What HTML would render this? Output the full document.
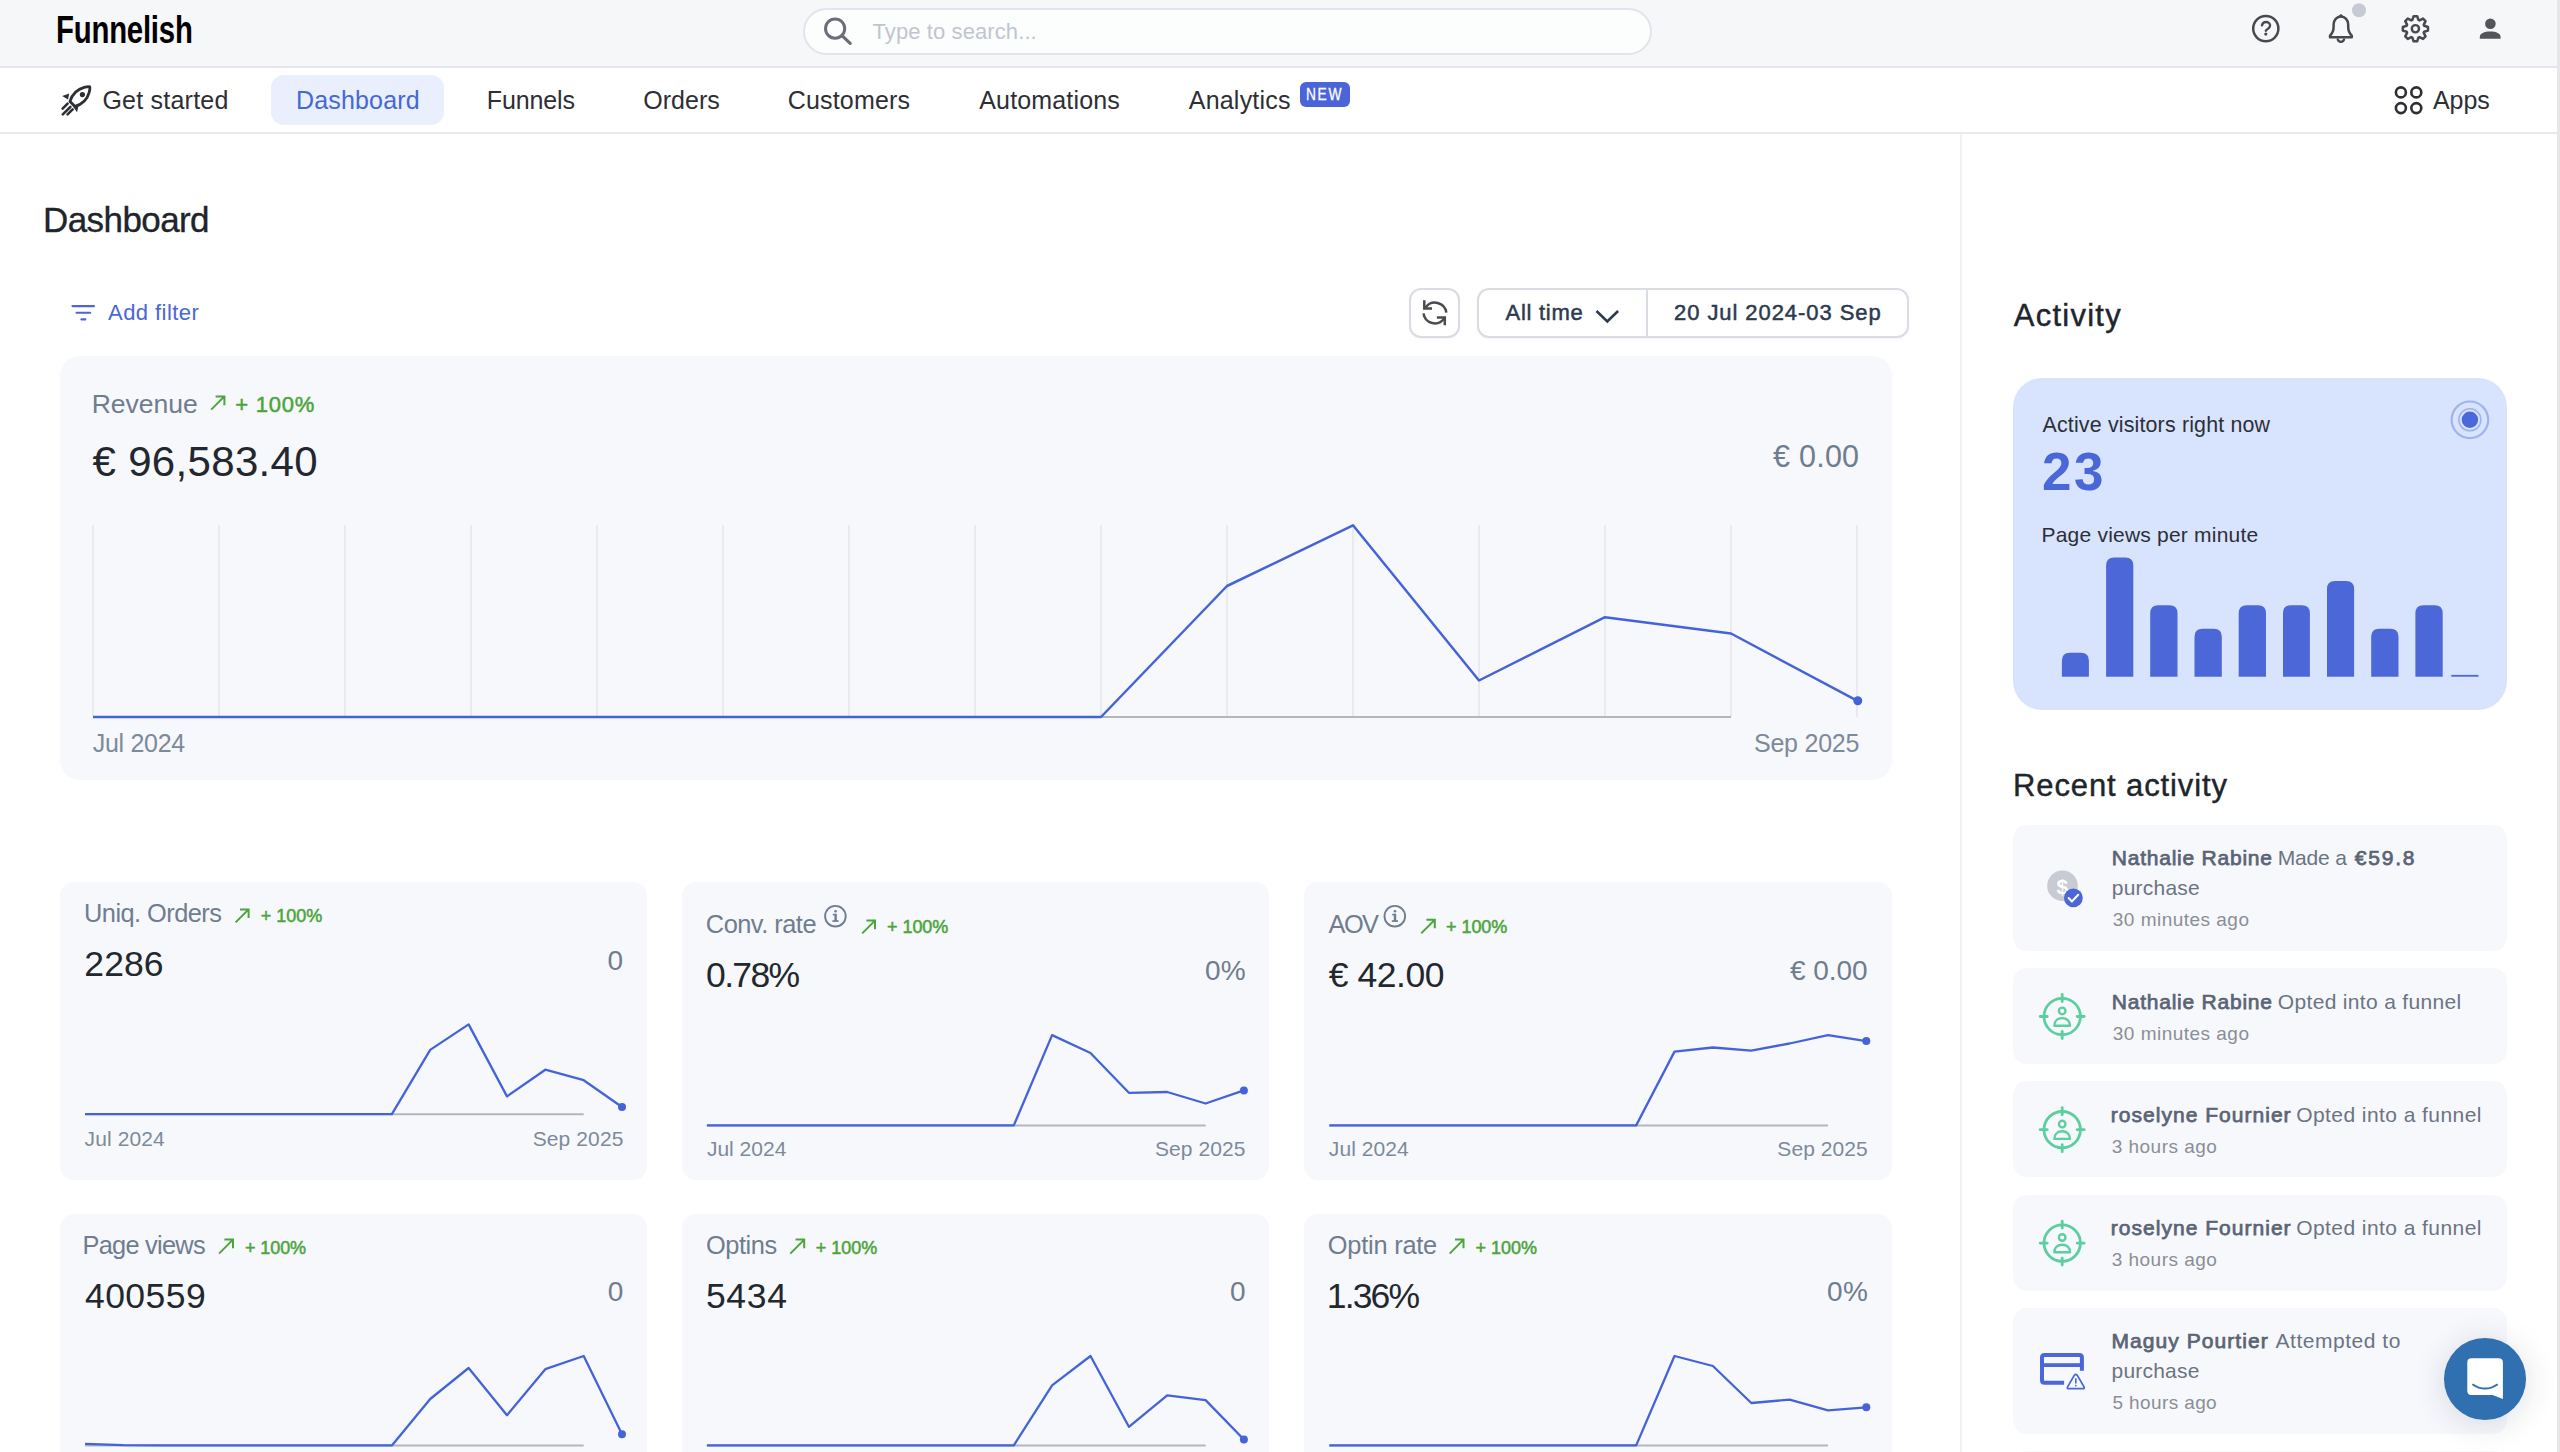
<!DOCTYPE html>
<html><head><meta charset="utf-8"><title>Funnelish Dashboard</title>
<style>
html,body{margin:0;padding:0;}
body{width:2560px;height:1452px;overflow:hidden;position:relative;background:#ffffff;font-family:"Liberation Sans",sans-serif;}
.a{position:absolute;box-sizing:border-box;}
.t{position:absolute;white-space:nowrap;line-height:1;font-family:"Liberation Sans",sans-serif;}
svg.ov{position:absolute;left:0;top:0;}
</style></head>
<body>
<!-- top bar -->
<div class="a" style="left:0;top:0;width:2560px;height:66px;background:#f6f7f9;"></div>
<div class="a" style="left:0;top:66px;width:2560px;height:2px;background:#e4e5ee;"></div>
<!-- nav -->
<div class="a" style="left:0;top:132px;width:2560px;height:2px;background:#e8e9f1;"></div>
<!-- sidebar border -->
<div class="a" style="left:1960px;top:134px;width:2px;height:1318px;background:#f1f1f7;"></div>
<!-- right edge -->
<div class="a" style="left:2557px;top:0;width:3px;height:1452px;background:#e6e6e9;"></div>

<!-- search -->
<div class="a" style="left:803px;top:8px;width:849px;height:47px;border:2px solid #e2e3ec;border-radius:24px;background:#fcfdfd;"></div>
<!-- nav pill -->
<div class="a" style="left:271px;top:75px;width:173px;height:50px;border-radius:13px;background:#e9effc;"></div>
<div class="a" style="left:1299.5px;top:82px;width:50px;height:25px;border-radius:6px;background:#4b65d8;"></div>

<!-- buttons -->
<div class="a" style="left:1409px;top:288px;width:51px;height:50px;border:2px solid #d9dce3;border-radius:12px;background:#fff;box-shadow:0 1px 2px rgba(0,0,0,0.04);"></div>
<div class="a" style="left:1477px;top:288px;width:432px;height:50px;border:2px solid #d9dce3;border-radius:12px;background:#fff;box-shadow:0 1px 2px rgba(0,0,0,0.04);"></div>
<div class="a" style="left:1646px;top:289px;width:2px;height:48px;background:#d9dce3;"></div>

<!-- cards -->
<div class="a" style="left:60px;top:356px;width:1832px;height:424px;border-radius:20px;background:#f7f8fc;"></div>
<div class="a" style="left:60px;top:882px;width:587px;height:298px;border-radius:14px;background:#f7f8fc;"></div>
<div class="a" style="left:682px;top:882px;width:587px;height:298px;border-radius:14px;background:#f7f8fc;"></div>
<div class="a" style="left:1304px;top:882px;width:588px;height:298px;border-radius:14px;background:#f7f8fc;"></div>
<div class="a" style="left:60px;top:1214px;width:587px;height:300px;border-radius:14px;background:#f7f8fc;"></div>
<div class="a" style="left:682px;top:1214px;width:587px;height:300px;border-radius:14px;background:#f7f8fc;"></div>
<div class="a" style="left:1304px;top:1214px;width:588px;height:300px;border-radius:14px;background:#f7f8fc;"></div>

<!-- sidebar cards -->
<div class="a" style="left:2013px;top:378px;width:494px;height:332px;border-radius:29px;background:#d8e3fd;"></div>
<div class="a" style="left:2013px;top:825px;width:494px;height:126px;border-radius:14px;background:#f7f8fc;"></div>
<div class="a" style="left:2013px;top:968px;width:494px;height:96px;border-radius:14px;background:#f7f8fc;"></div>
<div class="a" style="left:2013px;top:1081px;width:494px;height:96px;border-radius:14px;background:#f7f8fc;"></div>
<div class="a" style="left:2013px;top:1195px;width:494px;height:96px;border-radius:14px;background:#f7f8fc;"></div>
<div class="a" style="left:2013px;top:1308px;width:494px;height:126px;border-radius:14px;background:#f7f8fc;"></div>
<div class="a" style="left:2013px;top:1451px;width:494px;height:60px;border-radius:14px;background:#f7f8fc;"></div>

<span class="t" style="left:1306.4px;top:85.9px;font-size:16.4px;color:#fff;transform-origin:0 0;transform:scaleX(0.84);letter-spacing:2px;-webkit-text-stroke:0.3px #fff;">NEW</span>
<!-- logo -->
<span class="t" style="left:56px;top:10.8px;font-size:38.9px;font-weight:bold;color:#000;transform-origin:0 0;transform:scaleX(0.755);letter-spacing:-0.3px;">Funnelish</span>

<span class="t" style="left:872.50px;top:20.60px;font-size:22px;color:#c2c5cf;letter-spacing:0.098px;">Type to search...</span>
<span class="t" style="left:102.40px;top:87.75px;font-size:25px;color:#2d2f35;letter-spacing:0.233px;">Get started</span>
<span class="t" style="left:486.75px;top:87.75px;font-size:25px;color:#2d2f35;letter-spacing:-0.115px;">Funnels</span>
<span class="t" style="left:643.25px;top:87.75px;font-size:25px;color:#2d2f35;letter-spacing:0.019px;">Orders</span>
<span class="t" style="left:787.75px;top:87.75px;font-size:25px;color:#2d2f35;letter-spacing:0.174px;">Customers</span>
<span class="t" style="left:979.25px;top:87.75px;font-size:25px;color:#2d2f35;letter-spacing:0.154px;">Automations</span>
<span class="t" style="left:1188.75px;top:87.75px;font-size:25px;color:#2d2f35;letter-spacing:0.214px;">Analytics</span>
<span class="t" style="left:2433.00px;top:87.75px;font-size:25px;color:#2d2f35;letter-spacing:-0.094px;">Apps</span>
<span class="t" style="left:296.00px;top:88.00px;font-size:25px;color:#4767d6;letter-spacing:0.169px;">Dashboard</span>
<span class="t" style="left:43.00px;top:202.35px;font-size:35px;color:#20242b;letter-spacing:-0.582px;-webkit-text-stroke:0.35px #20242b;">Dashboard</span>
<span class="t" style="left:108.10px;top:301.90px;font-size:22px;color:#4a66d8;letter-spacing:0.423px;">Add filter</span>
<span class="t" style="left:1505.60px;top:301.90px;font-size:22px;color:#2c3a4f;-webkit-text-stroke:0.5px #2c3a4f;letter-spacing:0.716px;">All time</span>
<span class="t" style="left:1674.00px;top:301.90px;font-size:22px;color:#2c3a4f;-webkit-text-stroke:0.5px #2c3a4f;letter-spacing:0.931px;">20 Jul 2024-03 Sep</span>
<span class="t" style="left:91.75px;top:390.59px;font-size:26.6px;color:#6f7d8f;letter-spacing:-0.085px;">Revenue</span>
<span class="t" style="left:235.25px;top:393.55px;font-size:22px;color:#4aa53a;-webkit-text-stroke:0.5px #4aa53a;letter-spacing:0.767px;">+ 100%</span>
<span class="t" style="left:92.50px;top:440.55px;font-size:42px;color:#23272e;letter-spacing:0.323px;">€ 96,583.40</span>
<span class="t" style="left:1773.10px;top:440.97px;font-size:30.5px;color:#6f7d8f;letter-spacing:0.233px;">€ 0.00</span>
<span class="t" style="left:92.80px;top:731.15px;font-size:25px;color:#7d8a9a;letter-spacing:-0.302px;">Jul 2024</span>
<span class="t" style="left:1754.00px;top:731.15px;font-size:25px;color:#7d8a9a;letter-spacing:-0.234px;">Sep 2025</span>
<span class="t" style="left:84.10px;top:901.01px;font-size:25.4px;color:#6f7d8f;letter-spacing:-0.557px;">Uniq. Orders</span>
<span class="t" style="left:260.80px;top:907.30px;font-size:18px;color:#4aa53a;-webkit-text-stroke:0.5px #4aa53a;">+ 100%</span>
<span class="t" style="left:84.30px;top:947.08px;font-size:35.5px;color:#23272e;letter-spacing:0.090px;">2286</span>
<span class="t" style="left:607.60px;top:946.50px;font-size:28px;color:#6f7d8f;">0</span>
<span class="t" style="left:84.50px;top:1127.55px;font-size:21px;color:#7d8a9a;letter-spacing:0.126px;">Jul 2024</span>
<span class="t" style="left:532.70px;top:1127.55px;font-size:21px;color:#7d8a9a;letter-spacing:0.109px;">Sep 2025</span>
<span class="t" style="left:705.80px;top:911.91px;font-size:25.4px;color:#6f7d8f;letter-spacing:-0.503px;">Conv. rate</span>
<span class="t" style="left:887.00px;top:918.20px;font-size:18px;color:#4aa53a;-webkit-text-stroke:0.5px #4aa53a;letter-spacing:-0.049px;">+ 100%</span>
<span class="t" style="left:706.10px;top:957.83px;font-size:35.5px;color:#23272e;letter-spacing:-1.673px;">0.78%</span>
<span class="t" style="left:1205.10px;top:957.00px;font-size:28px;color:#6f7d8f;letter-spacing:0.028px;">0%</span>
<span class="t" style="left:706.90px;top:1138.05px;font-size:21px;color:#7d8a9a;letter-spacing:0.012px;">Jul 2024</span>
<span class="t" style="left:1154.90px;top:1138.05px;font-size:21px;color:#7d8a9a;letter-spacing:0.080px;">Sep 2025</span>
<span class="t" style="left:1328.60px;top:911.91px;font-size:25.4px;color:#6f7d8f;letter-spacing:-1.600px;">AOV</span>
<span class="t" style="left:1446.00px;top:918.20px;font-size:18px;color:#4aa53a;-webkit-text-stroke:0.5px #4aa53a;letter-spacing:-0.049px;">+ 100%</span>
<span class="t" style="left:1328.80px;top:957.83px;font-size:35.5px;color:#23272e;letter-spacing:-0.467px;">€ 42.00</span>
<span class="t" style="left:1790.00px;top:957.45px;font-size:28px;color:#6f7d8f;letter-spacing:-0.075px;">€ 0.00</span>
<span class="t" style="left:1328.80px;top:1138.05px;font-size:21px;color:#7d8a9a;letter-spacing:0.083px;">Jul 2024</span>
<span class="t" style="left:1777.30px;top:1138.05px;font-size:21px;color:#7d8a9a;letter-spacing:0.080px;">Sep 2025</span>
<span class="t" style="left:82.50px;top:1232.71px;font-size:25.4px;color:#6f7d8f;letter-spacing:-0.750px;">Page views</span>
<span class="t" style="left:244.90px;top:1239.00px;font-size:18px;color:#4aa53a;-webkit-text-stroke:0.5px #4aa53a;letter-spacing:-0.069px;">+ 100%</span>
<span class="t" style="left:85.00px;top:1278.92px;font-size:35.5px;color:#23272e;letter-spacing:0.437px;">400559</span>
<span class="t" style="left:607.70px;top:1277.50px;font-size:28px;color:#6f7d8f;">0</span>
<span class="t" style="left:705.90px;top:1232.71px;font-size:25.4px;color:#6f7d8f;letter-spacing:-0.417px;">Optins</span>
<span class="t" style="left:815.80px;top:1239.00px;font-size:18px;color:#4aa53a;-webkit-text-stroke:0.5px #4aa53a;">+ 100%</span>
<span class="t" style="left:705.90px;top:1278.92px;font-size:35.5px;color:#23272e;letter-spacing:0.723px;">5434</span>
<span class="t" style="left:1230.10px;top:1277.50px;font-size:28px;color:#6f7d8f;">0</span>
<span class="t" style="left:1327.80px;top:1232.71px;font-size:25.4px;color:#6f7d8f;letter-spacing:-0.230px;">Optin rate</span>
<span class="t" style="left:1475.40px;top:1239.00px;font-size:18px;color:#4aa53a;-webkit-text-stroke:0.5px #4aa53a;letter-spacing:0.031px;">+ 100%</span>
<span class="t" style="left:1326.80px;top:1278.92px;font-size:35.5px;color:#23272e;letter-spacing:-1.873px;">1.36%</span>
<span class="t" style="left:1827.00px;top:1277.50px;font-size:28px;color:#6f7d8f;letter-spacing:0.528px;">0%</span>
<span class="t" style="left:2013.75px;top:299.90px;font-size:31px;color:#20242b;letter-spacing:1.260px;-webkit-text-stroke:0.4px #20242b;">Activity</span>
<span class="t" style="left:2042.50px;top:414.81px;font-size:21.4px;color:#2b3038;letter-spacing:0.169px;">Active visitors right now</span>
<span class="t" style="left:2042.00px;top:444.95px;font-size:53px;color:#4a67d8;font-weight:bold;letter-spacing:2.424px;">23</span>
<span class="t" style="left:2041.50px;top:524.05px;font-size:21px;color:#2b3038;letter-spacing:0.212px;">Page views per minute</span>
<span class="t" style="left:2013.00px;top:769.55px;font-size:31px;color:#20242b;letter-spacing:0.887px;-webkit-text-stroke:0.4px #20242b;">Recent activity</span>
<span class="t" style="left:2111.80px;top:846.85px;font-size:21px;color:#5b6475;-webkit-text-stroke:0.75px #5b6475;letter-spacing:0.768px;">Nathalie Rabine</span>
<span class="t" style="left:2277.80px;top:846.85px;font-size:21px;color:#6b7483;letter-spacing:-0.193px;">Made a</span>
<span class="t" style="left:2354.70px;top:846.85px;font-size:21px;color:#5b6475;-webkit-text-stroke:0.75px #5b6475;letter-spacing:1.807px;">€59.8</span>
<span class="t" style="left:2111.80px;top:876.85px;font-size:21px;color:#6b7483;letter-spacing:0.213px;">purchase</span>
<span class="t" style="left:2112.80px;top:910.45px;font-size:19px;color:#8a8e96;letter-spacing:0.481px;">30 minutes ago</span>
<span class="t" style="left:2111.80px;top:990.55px;font-size:21px;color:#5b6475;-webkit-text-stroke:0.75px #5b6475;letter-spacing:0.768px;">Nathalie Rabine</span>
<span class="t" style="left:2277.80px;top:990.55px;font-size:21px;color:#6b7483;letter-spacing:0.333px;">Opted into a funnel</span>
<span class="t" style="left:2112.80px;top:1023.60px;font-size:19px;color:#8a8e96;letter-spacing:0.481px;">30 minutes ago</span>
<span class="t" style="left:2110.80px;top:1103.55px;font-size:21px;color:#5b6475;-webkit-text-stroke:0.75px #5b6475;letter-spacing:1.024px;">roselyne Fournier</span>
<span class="t" style="left:2296.20px;top:1103.55px;font-size:21px;color:#6b7483;letter-spacing:0.433px;">Opted into a funnel</span>
<span class="t" style="left:2111.80px;top:1136.65px;font-size:19px;color:#8a8e96;letter-spacing:0.461px;">3 hours ago</span>
<span class="t" style="left:2110.80px;top:1216.95px;font-size:21px;color:#5b6475;-webkit-text-stroke:0.75px #5b6475;letter-spacing:1.024px;">roselyne Fournier</span>
<span class="t" style="left:2296.20px;top:1216.95px;font-size:21px;color:#6b7483;letter-spacing:0.433px;">Opted into a funnel</span>
<span class="t" style="left:2111.80px;top:1250.05px;font-size:19px;color:#8a8e96;letter-spacing:0.461px;">3 hours ago</span>
<span class="t" style="left:2111.50px;top:1329.95px;font-size:21px;color:#5b6475;-webkit-text-stroke:0.75px #5b6475;letter-spacing:1.061px;">Maguy Pourtier</span>
<span class="t" style="left:2275.50px;top:1329.95px;font-size:21px;color:#6b7483;letter-spacing:0.528px;">Attempted to</span>
<span class="t" style="left:2111.50px;top:1359.95px;font-size:21px;color:#6b7483;letter-spacing:0.213px;">purchase</span>
<span class="t" style="left:2112.50px;top:1393.25px;font-size:19px;color:#8a8e96;letter-spacing:0.381px;">5 hours ago</span>

<svg class="ov" width="2560" height="1452" viewBox="0 0 2560 1452">
<line x1="93" y1="525" x2="93" y2="717" stroke="#e4e5ea" stroke-width="1.5"/>
<line x1="219" y1="525" x2="219" y2="717" stroke="#e4e5ea" stroke-width="1.5"/>
<line x1="345" y1="525" x2="345" y2="717" stroke="#e4e5ea" stroke-width="1.5"/>
<line x1="471" y1="525" x2="471" y2="717" stroke="#e4e5ea" stroke-width="1.5"/>
<line x1="597" y1="525" x2="597" y2="717" stroke="#e4e5ea" stroke-width="1.5"/>
<line x1="723" y1="525" x2="723" y2="717" stroke="#e4e5ea" stroke-width="1.5"/>
<line x1="849" y1="525" x2="849" y2="717" stroke="#e4e5ea" stroke-width="1.5"/>
<line x1="975" y1="525" x2="975" y2="717" stroke="#e4e5ea" stroke-width="1.5"/>
<line x1="1101" y1="525" x2="1101" y2="717" stroke="#e4e5ea" stroke-width="1.5"/>
<line x1="1227" y1="525" x2="1227" y2="717" stroke="#e4e5ea" stroke-width="1.5"/>
<line x1="1353" y1="525" x2="1353" y2="717" stroke="#e4e5ea" stroke-width="1.5"/>
<line x1="1479" y1="525" x2="1479" y2="717" stroke="#e4e5ea" stroke-width="1.5"/>
<line x1="1605" y1="525" x2="1605" y2="717" stroke="#e4e5ea" stroke-width="1.5"/>
<line x1="1731" y1="525" x2="1731" y2="717" stroke="#e4e5ea" stroke-width="1.5"/>
<line x1="1857" y1="525" x2="1857" y2="717" stroke="#e4e5ea" stroke-width="1.5"/>
<line x1="93" y1="717" x2="1731" y2="717" stroke="#b3b6ba" stroke-width="2"/>
<polyline points="93,717 219,717 345,717 471,717 597,717 723,717 849,717 975,717 1101,717 1227,586 1353,525.3 1479,680.5 1605,617.2 1731,633.5 1857,700.7" fill="none" stroke="#4563d9" stroke-width="2.5" stroke-linejoin="round"/>
<circle cx="1857.8" cy="700.7" r="4.5" fill="#4563d9"/>
<line x1="85" y1="1114.2" x2="583.7" y2="1114.2" stroke="#b3b6ba" stroke-width="2"/>
<polyline points="85.0,1114.2 123.4,1114.2 161.7,1114.2 200.1,1114.2 238.4,1114.2 276.8,1114.2 315.2,1114.2 353.5,1114.2 391.9,1114.2 430.2,1049.9 468.6,1024.4 507.0,1096.4 545.3,1069.7 583.7,1080.2 622.0,1107" fill="none" stroke="#4563d9" stroke-width="2.3" stroke-linejoin="round"/>
<circle cx="622.0" cy="1107" r="4" fill="#4563d9"/>
<line x1="706.9" y1="1125.4" x2="1205.6" y2="1125.4" stroke="#b3b6ba" stroke-width="2"/>
<polyline points="706.9,1125.4 745.3,1125.4 783.6,1125.4 822.0,1125.4 860.3,1125.4 898.7,1125.4 937.1,1125.4 975.4,1125.4 1013.8,1125.4 1052.1,1035.1 1090.5,1053 1128.9,1092.8 1167.2,1092 1205.6,1103.5 1243.9,1090.4" fill="none" stroke="#4563d9" stroke-width="2.3" stroke-linejoin="round"/>
<circle cx="1243.9" cy="1090.4" r="4" fill="#4563d9"/>
<line x1="1329.3" y1="1125.4" x2="1828.0" y2="1125.4" stroke="#b3b6ba" stroke-width="2"/>
<polyline points="1329.3,1125.4 1367.7,1125.4 1406.0,1125.4 1444.4,1125.4 1482.7,1125.4 1521.1,1125.4 1559.5,1125.4 1597.8,1125.4 1636.2,1125.4 1674.5,1051.6 1712.9,1047.5 1751.3,1050.6 1789.6,1043.5 1828.0,1035.1 1866.3,1041.1" fill="none" stroke="#4563d9" stroke-width="2.3" stroke-linejoin="round"/>
<circle cx="1866.3" cy="1041.1" r="4" fill="#4563d9"/>
<line x1="85" y1="1445.4" x2="583.7" y2="1445.4" stroke="#b3b6ba" stroke-width="2"/>
<polyline points="85.0,1443.8 123.4,1445.2 161.7,1445.4 200.1,1445.4 238.4,1445.4 276.8,1445.4 315.2,1445.4 353.5,1445.4 391.9,1445.4 430.2,1399 468.6,1368 507.0,1415.2 545.3,1369.2 583.7,1356 622.0,1434.2" fill="none" stroke="#4563d9" stroke-width="2.3" stroke-linejoin="round"/>
<circle cx="622.0" cy="1434.2" r="4" fill="#4563d9"/>
<line x1="706.9" y1="1445.4" x2="1205.6" y2="1445.4" stroke="#b3b6ba" stroke-width="2"/>
<polyline points="706.9,1445.4 745.3,1445.4 783.6,1445.4 822.0,1445.4 860.3,1445.4 898.7,1445.4 937.1,1445.4 975.4,1445.4 1013.8,1445.4 1052.1,1385.4 1090.5,1356 1128.9,1426.8 1167.2,1395.4 1205.6,1400.1 1243.9,1439.5" fill="none" stroke="#4563d9" stroke-width="2.3" stroke-linejoin="round"/>
<circle cx="1243.9" cy="1439.5" r="4" fill="#4563d9"/>
<line x1="1329.3" y1="1445.4" x2="1828.0" y2="1445.4" stroke="#b3b6ba" stroke-width="2"/>
<polyline points="1329.3,1445.4 1367.7,1445.4 1406.0,1445.4 1444.4,1445.4 1482.7,1445.4 1521.1,1445.4 1559.5,1445.4 1597.8,1445.4 1636.2,1445.4 1674.5,1356 1712.9,1366 1751.3,1403 1789.6,1399.7 1828.0,1410.4 1866.3,1407.3" fill="none" stroke="#4563d9" stroke-width="2.3" stroke-linejoin="round"/>
<circle cx="1866.3" cy="1407.3" r="4" fill="#4563d9"/>
<!-- search icon -->
<circle cx="835.1" cy="28.6" r="9.6" fill="none" stroke="#6b6e78" stroke-width="3"/>
<line x1="842.3" y1="35.8" x2="850.2" y2="43.4" stroke="#6b6e78" stroke-width="3.2" stroke-linecap="round"/>
<!-- help -->
<circle cx="2265.8" cy="28.6" r="12.6" fill="none" stroke="#48494f" stroke-width="2.5"/>
<path d="M2261.9 25.3 C2262.6 23 2264.3 22 2266 22 C2268.4 22 2270.1 23.6 2270.1 25.6 C2270.1 27.4 2268.8 28.4 2267.4 29.2 C2266.4 29.8 2265.9 30.2 2265.8 30.8" fill="none" stroke="#48494f" stroke-width="2.3" stroke-linecap="round"/>
<circle cx="2265.8" cy="34.1" r="1.6" fill="#48494f"/>
<!-- bell -->
<path d="M2330.0 37.2 L2351.8 37.2 L2351.8 35.6 C2349.2 33.2 2348.2 30.6 2348.2 27 L2348.2 24.6 C2348.2 20.2 2345 16.6 2340.9 16.6 C2336.8 16.6 2333.6 20.2 2333.6 24.6 L2333.6 27 C2333.6 30.6 2332.6 33.2 2330.0 35.6 Z" fill="none" stroke="#48494f" stroke-width="2.5" stroke-linejoin="round"/>
<path d="M2337.6 38.6 a3.3 3.3 0 0 0 6.6 0" fill="none" stroke="#48494f" stroke-width="2.3"/>
<path d="M2338.8 17.4 L2340.9 15.2 L2343 17.4" fill="none" stroke="#48494f" stroke-width="2.2" stroke-linejoin="round"/>
<circle cx="2359" cy="10.3" r="7" fill="#c6cad4"/>
<!-- gear -->
<path id="gear" d="M2412.37 19.96 L2413.63 16.17 L2417.17 16.17 L2418.43 19.96 L2419.48 20.39 L2423.04 18.61 L2425.54 21.11 L2423.76 24.67 L2424.19 25.72 L2427.98 26.98 L2427.98 30.52 L2424.19 31.78 L2423.76 32.83 L2425.54 36.39 L2423.04 38.89 L2419.48 37.11 L2418.43 37.54 L2417.17 41.33 L2413.63 41.33 L2412.37 37.54 L2411.32 37.11 L2407.76 38.89 L2405.26 36.39 L2407.04 32.83 L2406.61 31.78 L2402.82 30.52 L2402.82 26.98 L2406.61 25.72 L2407.04 24.67 L2405.26 21.11 L2407.76 18.61 L2411.32 20.39 Z" fill="none" stroke="#48494f" stroke-width="2.5" stroke-linejoin="round"/>
<circle cx="2415.4" cy="28.75" r="3.6" fill="none" stroke="#48494f" stroke-width="2.4"/>
<!-- user -->
<circle cx="2490.4" cy="23.8" r="5.3" fill="#54555b"/>
<path d="M2479.8 38.8 L2500.6 38.8 L2500.6 37 C2500.6 33.6 2496.2 31.6 2490.2 31.6 C2484.2 31.6 2479.8 33.6 2479.8 37 Z" fill="#54555b"/>
<!-- rocket -->
<g fill="none" stroke="#2e2f35" stroke-width="2.8" stroke-linejoin="round" stroke-linecap="round">
<path d="M70.0 101.4 L75.0 106.4 C82 104.4 87.2 99.6 89.2 92.4 C89.8 90 90.2 88.4 89.8 86.8 C88.2 86.4 86.6 86.8 84.2 87.4 C77 89.4 72 94.6 70.0 101.4 Z"/>
</g>
<circle cx="82.4" cy="94.6" r="2.6" fill="#2e2f35"/>
<path d="M62.2 96 L69.2 93.6 L68 99.4 Z" fill="#2e2f35"/>
<path d="M78.8 104.8 L77 112.2 L73 106.4 Z" fill="#2e2f35"/>
<g stroke="#2e2f35" stroke-width="2.6" stroke-linecap="round">
<line x1="62.6" y1="108.6" x2="67.6" y2="103.6"/>
<line x1="62.8" y1="114.4" x2="70.4" y2="106.8"/>
<line x1="67.6" y1="114.4" x2="72.6" y2="109.4"/>
</g>
<!-- apps -->
<g fill="none" stroke="#2e2f35" stroke-width="2.6">
<circle cx="2400.9" cy="92.4" r="5"/><circle cx="2416.3" cy="92.4" r="5"/>
<circle cx="2400.9" cy="108.1" r="5"/><circle cx="2416.3" cy="108.1" r="5"/>
</g>
<!-- filter icon -->
<g stroke="#4a66d8" stroke-width="2.1" stroke-linecap="round">
<line x1="72.5" y1="306.1" x2="94" y2="306.1"/>
<line x1="76.5" y1="312.8" x2="90.2" y2="312.8"/>
<line x1="81.4" y1="319.4" x2="85.3" y2="319.4"/>
</g>
<!-- refresh -->
<g fill="none" stroke="#4b4b4f" stroke-width="2.5">
<path d="M1446.3 312.6 A11.4 11.4 0 0 0 1425.6 307.6"/>
<path d="M1423.5 313.4 A11.4 11.4 0 0 0 1444.2 318.4"/>
<path d="M1424.3 300.3 L1424.3 308.4 L1432 308.4"/>
<path d="M1436.9 317.4 L1444.8 317.4 L1444.8 325.3"/>
</g>
<!-- chevron -->
<path d="M1596.5 311 L1607.3 321.4 L1618.1 311" fill="none" stroke="#2c3a4f" stroke-width="2.6"/>
<!-- green arrows -->
<g fill="none" stroke="#4aa53a" stroke-width="2">
<path d="M211.2 409.6 L224.4 396.4 M215.6 396.4 L224.4 396.4 L224.4 405.2"/>
<path d="M235.6 922.4 L248.6 909.4 M240 909.4 L248.6 909.4 L248.6 918"/>
<path d="M862.2 933.4 L875 920.6 M866.4 920.6 L875 920.6 L875 929.2"/>
<path d="M1421.2 933.4 L1434.8 919.8 M1426.4 919.8 L1434.8 919.8 L1434.8 928.2"/>
<path d="M219 1253.6 L233 1239.6 M224.4 1239.6 L233 1239.6 L233 1248.2"/>
<path d="M790.3 1253.6 L804.2 1239.6 M795.6 1239.6 L804.2 1239.6 L804.2 1248.2"/>
<path d="M1449.7 1253.6 L1463.5 1239.6 M1455 1239.6 L1463.5 1239.6 L1463.5 1248.2"/>
</g>
<!-- info icons -->
<g fill="none" stroke="#6f7d8f" stroke-width="1.9">
<circle cx="835.4" cy="916.2" r="10.3"/>
<circle cx="1394.8" cy="916.2" r="10.3"/>
</g>
<g fill="#6f7d8f">
<circle cx="835.6" cy="911.2" r="1.3"/><rect x="834.4" y="913.8" width="2.4" height="7.2"/><rect x="832.4" y="920.2" width="6.2" height="1.7"/><rect x="832.8" y="913.8" width="3" height="1.6"/>
<circle cx="1395" cy="911.2" r="1.3"/><rect x="1393.8" y="913.8" width="2.4" height="7.2"/><rect x="1391.8" y="920.2" width="6.2" height="1.7"/><rect x="1392.2" y="913.8" width="3" height="1.6"/>
</g>
<!-- radar -->
<circle cx="2469.9" cy="419.8" r="8.2" fill="#4a68d9"/>
<circle cx="2469.9" cy="419.8" r="11" fill="none" stroke="#9fb3ee" stroke-width="1.6"/>
<circle cx="2469.9" cy="419.8" r="18.3" fill="none" stroke="#9fb3ee" stroke-width="2.2"/>
<!-- bars -->
<g fill="#4c68d8">
<path d="M2061.9 676.7 L2061.9 660.8 Q2061.9 652.8 2069.9 652.8 L2080.9 652.8 Q2088.9 652.8 2088.9 660.8 L2088.9 676.7 Z"/>
<path d="M2106.1 676.7 L2106.1 565.5 Q2106.1 557.5 2114.1 557.5 L2125.3 557.5 Q2133.3 557.5 2133.3 565.5 L2133.3 676.7 Z"/>
<path d="M2150.2 676.7 L2150.2 613.2 Q2150.2 605.2 2158.2 605.2 L2169.5 605.2 Q2177.5 605.2 2177.5 613.2 L2177.5 676.7 Z"/>
<path d="M2194.5 676.7 L2194.5 636.7 Q2194.5 628.7 2202.5 628.7 L2213.8 628.7 Q2221.8 628.7 2221.8 636.7 L2221.8 676.7 Z"/>
<path d="M2238.7 676.7 L2238.7 613.2 Q2238.7 605.2 2246.7 605.2 L2258 605.2 Q2266 605.2 2266 613.2 L2266 676.7 Z"/>
<path d="M2283 676.7 L2283 613.2 Q2283 605.2 2291 605.2 L2301.9 605.2 Q2309.9 605.2 2309.9 613.2 L2309.9 676.7 Z"/>
<path d="M2327 676.7 L2327 589.1 Q2327 581.1 2335 581.1 L2346.1 581.1 Q2354.1 581.1 2354.1 589.1 L2354.1 676.7 Z"/>
<path d="M2371.2 676.7 L2371.2 636.7 Q2371.2 628.7 2379.2 628.7 L2390.5 628.7 Q2398.5 628.7 2398.5 636.7 L2398.5 676.7 Z"/>
<path d="M2415.4 676.7 L2415.4 613.2 Q2415.4 605.2 2423.4 605.2 L2434.7 605.2 Q2442.7 605.2 2442.7 613.2 L2442.7 676.7 Z"/>
<rect x="2451.3" y="674.9" width="27.2" height="1.8"/>
</g>
<!-- activity icons -->
<circle cx="2062.5" cy="885.8" r="15.3" fill="#c8cbd3"/>
<text x="2062.3" y="893.6" font-family="Liberation Sans" font-weight="bold" font-size="21" fill="#ffffff" text-anchor="middle">$</text>
<circle cx="2073.4" cy="897.9" r="9.4" fill="#4a66d8"/>
<path d="M2068.6 898 L2072 901.4 L2078.2 894.8" fill="none" stroke="#fff" stroke-width="2.1" stroke-linecap="round" stroke-linejoin="round"/>
<defs><g id="tgt" fill="none" stroke="#5dcea0" stroke-width="2.8" stroke-linecap="round">
<circle cx="0" cy="0" r="18.2"/>
<line x1="0" y1="-22" x2="0" y2="-15"/><line x1="0" y1="22" x2="0" y2="15"/>
<line x1="-22" y1="0" x2="-15" y2="0"/><line x1="22" y1="0" x2="15" y2="0"/>
<circle cx="0" cy="-5.6" r="3.3" stroke-width="2.4"/>
<path d="M-7.8 9.2 L7.8 9.2 C7.8 4.4 4.6 1.6 0 1.6 C-4.6 1.6 -7.8 4.4 -7.8 9.2 Z" stroke-width="2.4" stroke-linejoin="round"/>
</g></defs>
<use href="#tgt" transform="translate(2062.2 1016.5)"/>
<use href="#tgt" transform="translate(2062.2 1129.7)"/>
<use href="#tgt" transform="translate(2062.2 1243.1)"/>
<!-- card icon -->
<path d="M2064.1 1382.8 L2044.5 1382.8 Q2042 1382.8 2042 1380.3 L2042 1357.6 Q2042 1355.1 2044.5 1355.1 L2079.4 1355.1 Q2081.9 1355.1 2081.9 1357.6 L2081.9 1370.8" fill="none" stroke="#4a66d8" stroke-width="4"/>
<rect x="2042" y="1363.2" width="39.9" height="3.8" fill="#4a66d8"/>
<path d="M2074.3 1375.4 Q2075.8 1373.3 2077.3 1375.4 L2083.9 1386.6 Q2085 1388.7 2082.6 1388.7 L2069 1388.7 Q2066.6 1388.7 2067.7 1386.6 Z" fill="#f7f8fc" stroke="#4a66d8" stroke-width="1.8" stroke-linejoin="round"/>
<line x1="2075.8" y1="1378.2" x2="2075.8" y2="1383.6" stroke="#4a66d8" stroke-width="1.6"/>
<circle cx="2075.8" cy="1385.6" r="0.9" fill="#4a66d8"/>
</svg>

<!-- chat button -->
<div class="a" style="left:2444.4px;top:1338px;width:81.6px;height:81.6px;border-radius:50%;background:#3070b0;box-shadow:0 4px 32px rgba(30,40,70,0.15);"></div>
<svg class="ov" width="2560" height="1452" viewBox="0 0 2560 1452" style="pointer-events:none">
<path d="M2471.5 1358.2 L2498.7 1358.2 Q2502.9 1358.2 2502.9 1362.4 L2502.9 1399.1 L2492.6 1395 L2471.5 1395 Q2467.3 1395 2467.3 1390.8 L2467.3 1362.4 Q2467.3 1358.2 2471.5 1358.2 Z" fill="#ffffff"/>
<path d="M2472.4 1384.2 Q2485 1393 2497.7 1384.2" fill="none" stroke="#3070b0" stroke-width="2"/>
</svg>
</body></html>
